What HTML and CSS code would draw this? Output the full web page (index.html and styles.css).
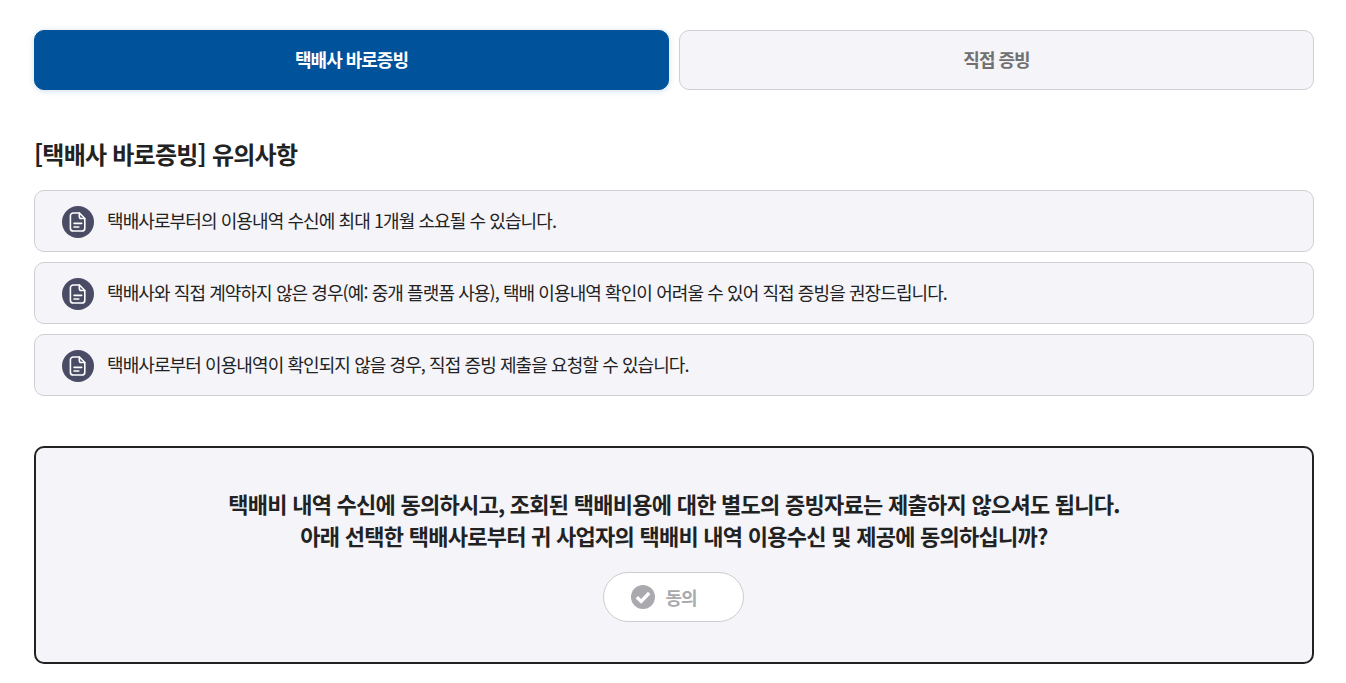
FILE: index.html
```html
<!DOCTYPE html>
<html lang="ko">
<head>
    <meta charset="UTF-8">
    <meta name="viewport" content="width=device-width, initial-scale=1.0">
    <title>택배사 바로증빙</title>
    <link rel="stylesheet" href="styles.css">
</head>
<body>
    <div class="container">
        <div class="tabs">
            <button class="tab tab-active">택배사 바로증빙</button>
            <button class="tab">직접 증빙</button>
        </div>

        <h2 class="notice-title">[택배사 바로증빙] 유의사항</h2>

        <ul class="notice-list">
            <li class="notice-item">
                <span class="notice-icon">
                    <svg width="24" height="24" viewBox="0 0 18 18" fill="none" stroke="#fff" stroke-width="1.2" stroke-linecap="round" stroke-linejoin="round"><path d="M5.5 2.2h4.6l4 4.2v7.2a2.2 2.2 0 0 1-2.2 2.2H5.5a2.2 2.2 0 0 1-2.2-2.2V4.4a2.2 2.2 0 0 1 2.2-2.2z"/><path d="M10 2.4v2.4a1.6 1.6 0 0 0 1.6 1.6H14"/><path d="M6 10h5.8M6 12.8h3.6"/></svg>
                </span>
                <span class="notice-text">택배사로부터의 이용내역 수신에 최대 1개월 소요될 수 있습니다.</span>
            </li>
            <li class="notice-item">
                <span class="notice-icon">
                    <svg width="24" height="24" viewBox="0 0 18 18" fill="none" stroke="#fff" stroke-width="1.2" stroke-linecap="round" stroke-linejoin="round"><path d="M5.5 2.2h4.6l4 4.2v7.2a2.2 2.2 0 0 1-2.2 2.2H5.5a2.2 2.2 0 0 1-2.2-2.2V4.4a2.2 2.2 0 0 1 2.2-2.2z"/><path d="M10 2.4v2.4a1.6 1.6 0 0 0 1.6 1.6H14"/><path d="M6 10h5.8M6 12.8h3.6"/></svg>
                </span>
                <span class="notice-text">택배사와 직접 계약하지 않은 경우(예: 중개 플랫폼 사용), 택배 이용내역 확인이 어려울 수 있어 직접 증빙을 권장드립니다.</span>
            </li>
            <li class="notice-item">
                <span class="notice-icon">
                    <svg width="24" height="24" viewBox="0 0 18 18" fill="none" stroke="#fff" stroke-width="1.2" stroke-linecap="round" stroke-linejoin="round"><path d="M5.5 2.2h4.6l4 4.2v7.2a2.2 2.2 0 0 1-2.2 2.2H5.5a2.2 2.2 0 0 1-2.2-2.2V4.4a2.2 2.2 0 0 1 2.2-2.2z"/><path d="M10 2.4v2.4a1.6 1.6 0 0 0 1.6 1.6H14"/><path d="M6 10h5.8M6 12.8h3.6"/></svg>
                </span>
                <span class="notice-text">택배사로부터 이용내역이 확인되지 않을 경우, 직접 증빙 제출을 요청할 수 있습니다.</span>
            </li>
        </ul>

        <div class="agree-box">
            <p class="agree-text">택배비 내역 수신에 동의하시고, 조회된 택배비용에 대한 별도의 증빙자료는 제출하지 않으셔도 됩니다.<br>아래 선택한 택배사로부터 귀 사업자의 택배비 내역 이용수신 및 제공에 동의하십니까?</p>
            <button class="agree-btn">
                <svg width="24" height="24" viewBox="0 0 24 24"><circle cx="12" cy="12" r="12" fill="#a9a9ae"/><path d="M5.8 12.2l4.4 4.2 8-8.4" fill="none" stroke="#fff" stroke-width="3.4"/></svg>
                <span>동의</span>
            </button>
        </div>
    </div>
</body>
</html>
```

FILE: styles.css
```css
body {
    font-family: "Noto Sans CJK KR", "Noto Sans", sans-serif;
    background-color: #ffffff;
    color: #222222;
    margin: 0;
}

.container {
    padding: 30px 32px 19px 34px;
}

.tabs {
    display: flex;
    gap: 10px;
}

.tab {
    flex: 1;
    height: 60px;
    padding: 0 0 2px;
    border: 1px solid #d0d0d4;
    border-radius: 10px;
    background-color: #f4f4f9;
    color: #707070;
    font-family: inherit;
    font-size: 18px;
    font-weight: 700;
    letter-spacing: -1px;
}

.tab-active {
    background-color: #00529b;
    border-color: #00529b;
    color: #ffffff;
    box-shadow: 0 1px 6px rgba(0, 82, 155, 0.2);
}

.notice-title {
    font-size: 24px;
    font-weight: 700;
    letter-spacing: -0.75px;
    line-height: 34px;
    margin: 47px 0 19px;
}

.notice-list {
    list-style: none;
    margin: 0;
    padding: 0;
    display: flex;
    flex-direction: column;
    gap: 10px;
}

.notice-item {
    display: flex;
    align-items: center;
    gap: 13px;
    height: 62px;
    box-sizing: border-box;
    padding: 2px 0 0 27px;
    border: 1px solid #d0d0d4;
    border-radius: 10px;
    background-color: #f4f4f9;
    font-size: 18px;
    letter-spacing: -0.91px;
}

.notice-text {
    padding-bottom: 4px;
}

.notice-icon {
    width: 32px;
    height: 32px;
    border-radius: 50%;
    background-color: #4a4c66;
    display: flex;
    align-items: center;
    justify-content: center;
    flex-shrink: 0;
}

.agree-box {
    margin-top: 50px;
    height: 218px;
    box-sizing: border-box;
    border: 2px solid #222222;
    border-radius: 10px;
    background-color: #f4f4f9;
    padding-top: 39px;
    text-align: center;
}

.agree-text {
    margin: 0;
    font-size: 22px;
    font-weight: 700;
    line-height: 32px;
    letter-spacing: -0.74px;
}

.agree-btn {
    margin: 21px 2px 0 0;
    width: 141px;
    height: 50px;
    border: 1px solid #cccccc;
    border-radius: 25px;
    background-color: #ffffff;
    color: #a9a9ae;
    font-family: inherit;
    font-size: 18px;
    font-weight: 700;
    letter-spacing: -1px;
    display: inline-flex;
    align-items: center;
    gap: 11px;
    padding: 0 0 0 27px;
}
```
